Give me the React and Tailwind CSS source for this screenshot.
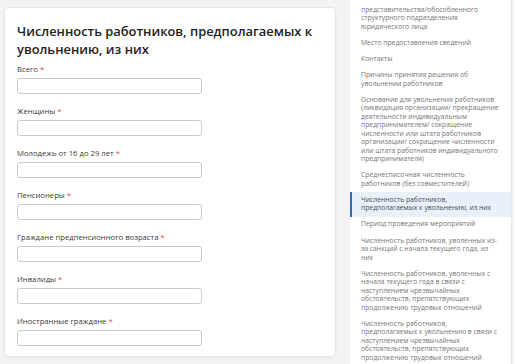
import React from "react";

const FONT = { fontFamily: '"Open Sans", "Noto Sans", Arial, sans-serif' };

const fields = [
  "Всего",
  "Женщины",
  "Молодежь от 16 до 29 лет",
  "Пенсионеры",
  "Граждане предпенсионного возраста",
  "Инвалиды",
  "Иностранные граждане",
];

const menu = [
  ["представительства/обособленного", "структурного подразделения", "юридического лица"],
  ["Место предоставления сведений"],
  ["Контакты"],
  ["Причины принятия решения об", "увольнении работников"],
  [
    "Основание для увольнения работников",
    "(ликвидация организации/ прекращение",
    "деятельности индивидуальным",
    "предпринимателем/ сокращение",
    "численности или штата работников",
    "организации/ сокращение численности",
    "или штата работников индивидуального",
    "предпринимателя)",
  ],
  ["Среднесписочная численность", "работников (без совместителей)"],
  ["Численность работников,", "предполагаемых к увольнению, из них"],
  ["Период проведения мероприятий"],
  ["Численность работников, уволенных из-", "за санкций с начала текущего года, из", "них"],
  [
    "Численность работников, уволенных с",
    "начала текущего года в связи с",
    "наступлением чрезвычайных",
    "обстоятельств, препятствующих",
    "продолжению трудовых отношений",
  ],
  [
    "Численность работников,",
    "предполагаемых к увольнению в связи с",
    "наступлением чрезвычайных",
    "обстоятельств, препятствующих",
    "продолжению трудовых отношений",
  ],
];

const ACTIVE = 6;

function Field({ label }) {
  return (
    <div className="flex flex-col">
      <label className="text-[7.7px] leading-[10px] font-medium text-[#3a3a3a]">
        {label} <span className="text-[#e0474c]">*</span>
      </label>
      <input
        type="text"
        className="mt-[4px] h-[16px] w-[185px] rounded-[3px] border border-[#c9c9c9] bg-white outline-none"
      />
    </div>
  );
}

export default function App() {
  return (
    <div className="flex h-[364px] w-[514px] overflow-hidden bg-[#f3f3f3]" style={FONT}>
      <div className="ml-[4px] mt-[7px] h-[350px] w-[332px] rounded-[5px] border border-[#e6e6e6] bg-white px-[12px] pt-[14px] shadow-[0_1px_3px_rgba(0,0,0,0.06)]">
        <h1 className="text-[12.9px] leading-[18px] font-semibold text-[#222]">
          <span className="whitespace-nowrap">Численность работников, предполагаемых к</span>
          <br />
          увольнению, из них
        </h1>
        <div className="mt-[6px] flex flex-col gap-[12px]">
          {fields.map((f) => (
            <Field key={f} label={f} />
          ))}
        </div>
      </div>

      <div className="ml-[14px] w-[162px] border-r border-[#e8e8e8] bg-white pt-[2px]">
        {menu.map((lines, i) => (
          <div
            key={i}
            className={
              i === ACTIVE
                ? "border-l-2 border-[#2f6db3] bg-[#e8f0f9] py-[3.8px] pl-[9px] text-[6.8px] leading-[8.5px] text-[#4a4f57]"
                : "border-l-2 border-transparent py-[3.8px] pl-[9px] text-[6.8px] leading-[8.5px] text-[#767676]"
            }
          >
            {lines.map((l, j) => (
              <div key={j} className="whitespace-nowrap">
                {l}
              </div>
            ))}
          </div>
        ))}
      </div>
    </div>
  );
}
